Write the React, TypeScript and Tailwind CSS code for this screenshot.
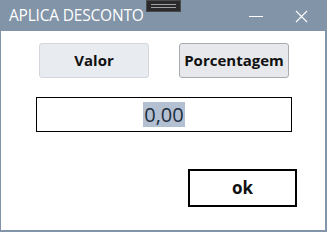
import React from "react";

export default function App() {
  return (
    <div className="relative w-[327px] h-[232px] bg-[#8294a7] flex flex-col overflow-hidden" style={{ fontFamily: '"Open Sans", "Noto Sans", sans-serif' }}>
      <div className="absolute left-[146px] top-0 w-[35px] h-[12px] bg-[#2a2a2c] border border-[#4a4a4a] flex flex-col items-center justify-center gap-[2px]">
        <div className="w-[25px] h-[1px] bg-[#a0a0a0]" />
        <div className="w-[25px] h-[1px] bg-[#a0a0a0]" />
      </div>
      <div className="h-[31px] shrink-0 flex items-center pl-[9px] pt-[1px]">
        <span className="text-[15.5px] text-white tracking-[-0.2px] leading-none">APLICA DESCONTO</span>
        <div className="flex-1" />
        <div className="w-[14px] h-[1px] bg-white mr-[32px]" />
        <svg width="13" height="13" viewBox="0 0 13 13" className="mr-[19px]">
          <path d="M1 1 L12 12 M12 1 L1 12" stroke="white" strokeWidth="1.1" />
        </svg>
      </div>
      <div className="flex-1 bg-white ml-[1px] mr-[2px] mb-[2px] flex flex-col">
        <div className="flex pl-[38px] pt-[12px] gap-[30px]">
          <div className="w-[110px] h-[35px] bg-[#e8ebf0] border border-[#d4d8de] rounded-[3px] flex items-center justify-center text-[15px] font-bold text-[#111]">Valor</div>
          <div className="w-[110px] h-[35px] bg-[#e6e8ec] border border-[#a8abb0] rounded-[3px] flex items-center justify-center text-[15px] font-bold text-[#111]">Porcentagem</div>
        </div>
        <div className="ml-[35px] mt-[19px] w-[256px] h-[35px] border-[1.5px] border-black flex items-center justify-center">
          <span className="bg-[#b3c0d2] text-[20px] text-[#1d2d3d] leading-[25px] px-[1px]">0,00</span>
        </div>
        <div className="flex justify-end mr-[28px] mt-[37px]">
          <div className="w-[109px] h-[38px] border-2 border-black flex items-center justify-center text-[17px] font-bold text-[#111]">ok</div>
        </div>
      </div>
    </div>
  );
}
